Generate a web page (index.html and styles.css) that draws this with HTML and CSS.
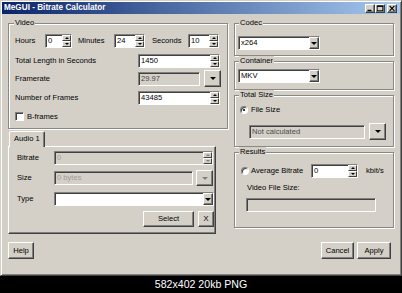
FILE: index.html
```html
<!DOCTYPE html>
<html>
<head>
<meta charset="utf-8">
<link rel="stylesheet" href="styles.css">
</head>
<body>
<div class="window">
  <div class="titlebar">
    <span class="title">MeGUI - Bitrate Calculator</span>
    <div class="caps">
      <span class="cap"><svg width="8" height="7" viewBox="0 0 8 7"><rect x="1.5" y="4.8" width="4" height="1.3" fill="#000"/></svg></span>
      <span class="cap"><svg width="8" height="7" viewBox="0 0 8 7"><rect x="1.2" y="0.9" width="5.6" height="4.8" fill="none" stroke="#000" stroke-width="0.8"/><rect x="1" y="0.6" width="6" height="1.3" fill="#000"/></svg></span>
      <span class="cap close"><svg width="8" height="7" viewBox="0 0 8 7"><path d="M1.6 0.9 L6.4 5.9 M6.4 0.9 L1.6 5.9" stroke="#000" stroke-width="1.2"/></svg></span>
    </div>
  </div>
  <div class="client">
    <div class="cols">
      <div class="left">
        <fieldset class="group video">
          <legend>Video</legend>
          <div class="row r1">
            <span class="lbl w-hours">Hours</span>
            <div class="tb w-hspin">0<span class="spin"><span class="sb"><i class="up"></i></span><span class="sb"><i class="dn"></i></span></span></div>
            <span class="lbl w-min">Minutes</span>
            <div class="tb w-mspin">24<span class="spin"><span class="sb"><i class="up"></i></span><span class="sb"><i class="dn"></i></span></span></div>
            <span class="lbl w-sec">Seconds</span>
            <div class="tb w-mspin">10<span class="spin"><span class="sb"><i class="up"></i></span><span class="sb"><i class="dn"></i></span></span></div>
          </div>
          <div class="row r2">
            <span class="lbl w-vlabel">Total Length in Seconds</span>
            <div class="tb w-vfield">1450<span class="spin"><span class="sb"><i class="up"></i></span><span class="sb"><i class="dn"></i></span></span></div>
          </div>
          <div class="row r3">
            <span class="lbl w-vlabel">Framerate</span>
            <div class="tb ro w-fr">29.97</div>
            <div class="btn ddbtn"><i class="tri"></i></div>
          </div>
          <div class="row r4">
            <span class="lbl w-vlabel">Number of Frames</span>
            <div class="tb w-vfield">43485<span class="spin"><span class="sb"><i class="up"></i></span><span class="sb"><i class="dn"></i></span></span></div>
          </div>
          <div class="row r5">
            <span class="chk"></span>
            <span class="lbl">B-frames</span>
          </div>
        </fieldset>
        <div class="tabs">
          <div class="tabstrip"><div class="tab">Audio 1</div></div>
          <div class="tabpanel">
            <div class="row p1">
              <span class="lbl w-alabel">Bitrate</span>
              <div class="tb dis w-abit">0<span class="spin"><span class="sb"><i class="up g"></i></span><span class="sb"><i class="dn g"></i></span></span></div>
            </div>
            <div class="row p2">
              <span class="lbl w-alabel">Size</span>
              <div class="tb dis w-asize">0 bytes</div>
              <div class="btn ddbtn small"><i class="tri g"></i></div>
            </div>
            <div class="row p3">
              <span class="lbl w-alabel">Type</span>
              <div class="tb w-atype"><span class="cbtn"><i class="tri"></i></span></div>
            </div>
            <div class="row p4">
              <div class="btn w-select">Select</div>
              <div class="btn w-x">X</div>
            </div>
          </div>
        </div>
      </div>
      <div class="right">
        <fieldset class="group codec">
          <legend>Codec</legend>
          <div class="tb w-combo">x264<span class="cbtn"><i class="tri"></i></span></div>
        </fieldset>
        <fieldset class="group container">
          <legend>Container</legend>
          <div class="tb w-combo">MKV<span class="cbtn"><i class="tri"></i></span></div>
        </fieldset>
        <fieldset class="group total">
          <legend>Total Size</legend>
          <div class="row t1">
            <span class="radio on"></span>
            <span class="lbl">File Size</span>
          </div>
          <div class="row t2">
            <div class="tb ro w-fsize">Not calculated</div>
            <div class="btn ddbtn"><i class="tri"></i></div>
          </div>
        </fieldset>
        <fieldset class="group results">
          <legend>Results</legend>
          <div class="row q1">
            <span class="radio"></span>
            <span class="lbl w-avg">Average Bitrate</span>
            <div class="tb w-avgspin">0<span class="spin"><span class="sb"><i class="up"></i></span><span class="sb"><i class="dn"></i></span></span></div>
            <span class="lbl kbit">kbit/s</span>
          </div>
          <div class="row q2"><span class="lbl">Video File Size:</span></div>
          <div class="row q3"><div class="tb ro w-vfs"></div></div>
        </fieldset>
      </div>
    </div>
    <div class="bottom">
      <div class="btn w-help">Help</div>
      <div class="spacer"></div>
      <div class="btn w-cancel">Cancel</div>
      <div class="btn w-apply">Apply</div>
    </div>
  </div>
</div>
<div class="caption">582x402 20kb PNG</div>
</body>
</html>
```
FILE: styles.css
```css
* { box-sizing: border-box; }
html, body { margin: 0; padding: 0; }
body {
  background: #000;
  width: 402px;
  height: 293px;
  overflow: hidden;
  font-family: "Liberation Sans", Arial, sans-serif;
}
.window {
  width: 402px;
  height: 276px;
  background: #d4d0c8;
  border: 1px solid;
  border-color: #d4d0c8 #404040 #404040 #d4d0c8;
  box-shadow: inset 1px 1px #fff, inset -1px -1px #808080;
  padding: 1px;
  display: flex;
  flex-direction: column;
  font-size: 7.6px;
  color: #000;
}
.titlebar {
  height: 12px;
  flex: none;
  background: linear-gradient(to right, #0a246a, #a6caf0);
  display: flex;
  align-items: center;
  padding: 0 3px 0 2px;
}
.title {
  flex: 1;
  color: #fff;
  font-weight: bold;
  font-size: 8.2px;
  line-height: 12px;
  white-space: nowrap;
}
.caps { display: flex; }
.cap {
  width: 10px;
  height: 9px;
  background: #d4d0c8;
  border: 1px solid;
  border-color: #fff #404040 #404040 #fff;
  box-shadow: inset -1px -1px #808080;
  display: flex;
}
.cap svg { display: block; }
.cap.close { margin-left: 2px; }

.client { flex: 1; display: flex; flex-direction: column; }
.cols {
  display: flex;
  gap: 6px;
  align-items: flex-start;
  padding: 4px 6px 0 6px;
}
.left { width: 220px; }
.right { width: 160px; }

fieldset.group {
  margin: 0;
  min-width: 0;
  border: 1px solid #8a8882;
  box-shadow: inset 1px 1px #fff, 1px 1px #fff;
}
fieldset.group legend {
  padding: 0 1px;
  font-size: 7.6px;
  line-height: 10px;
  height: 10px;
  background: #d4d0c8;
}
.lbl { line-height: 10px; white-space: nowrap; }
.row { display: flex; align-items: center; }

/* Video */
.video { padding: 6px 5px 7px 6px; }
.video legend { margin-left: -1px; }
.r1 { height: 14px; }
.w-hours { width: 30px; }
.w-hspin { width: 27px; }
.w-min { width: 36px; margin-left: 6px; }
.w-sec { width: 36px; margin-left: 7px; }
.w-mspin { width: 31px; }
.r2 { height: 14px; margin-top: 6px; }
.w-vlabel { width: 123px; }
.w-vfield { width: 82px; }
.r3 { height: 17px; margin-top: 2px; }
.w-fr { width: 62px; }
.r3 .ddbtn { margin-left: 4px; }
.r4 { height: 14px; margin-top: 4px; }
.r5 { height: 9px; margin-top: 7px; }
.chk {
  width: 9px; height: 9px;
  background: #fff;
  border: 1px solid;
  border-color: #808080 #fff #fff #808080;
  box-shadow: inset 1px 1px #404040;
  margin-right: 3px;
}

/* text boxes */
.tb {
  height: 14px;
  background: #fff;
  border: 1px solid;
  border-color: #808080 #fff #fff #808080;
  box-shadow: inset 1px 1px #404040;
  display: flex;
  align-items: center;
  padding-left: 2px;
  line-height: 10px;
  white-space: nowrap;
  color: #000;
}
.tb.dis { background: #d4d0c8; color: #a09c94; }
.tb.ro { background: #d4d0c8; color: #4a4a4a; }
.spin {
  margin-left: auto;
  width: 9px;
  height: 12px;
  display: flex;
  flex-direction: column;
}
.sb {
  flex: 1;
  background: #d4d0c8;
  border: 1px solid;
  border-color: #fff #404040 #404040 #fff;
  display: flex;
  align-items: center;
  justify-content: center;
}
.up, .dn { display: block; width: 0; height: 0; border-left: 2px solid transparent; border-right: 2px solid transparent; }
.up { border-bottom: 2px solid #000; }
.dn { border-top: 2px solid #000; }
.up.g { border-bottom-color: #808080; }
.dn.g { border-top-color: #808080; }
.tri { display: block; width: 0; height: 0; border-left: 3px solid transparent; border-right: 3px solid transparent; border-top: 3px solid #000; }
.tri.g { border-top-color: #808080; }
.cbtn {
  margin-left: auto;
  width: 10px;
  height: 12px;
  background: #d4d0c8;
  border: 1px solid;
  border-color: #fff #404040 #404040 #fff;
  box-shadow: inset -1px -1px #808080;
  display: flex;
  align-items: center;
  justify-content: center;
}

/* buttons */
.btn {
  height: 17px;
  background: #d4d0c8;
  border: 1px solid;
  border-color: #fff #404040 #404040 #fff;
  box-shadow: inset -1px -1px #808080;
  display: flex;
  align-items: center;
  justify-content: center;
  line-height: 10px;
}
.ddbtn { width: 17px; }
.ddbtn.small { height: 16px; }

/* tabs */
.tabs { margin-top: 2px; }
.tabstrip { display: flex; height: 15px; }
.tab {
  width: 36px;
  height: 16px;
  margin-left: 1px;
  padding-left: 4px;
  line-height: 13px;
  background: #d4d0c8;
  border: 1px solid;
  border-bottom: none;
  border-color: #fff #404040 transparent #fff;
  box-shadow: inset -1px 0 #808080;
  border-radius: 2px 2px 0 0;
  position: relative;
  z-index: 1;
}
.tabpanel {
  width: 208px;
  height: 88px;
  border: 1px solid;
  border-color: #fff #404040 #404040 #fff;
  box-shadow: inset -1px -1px #808080;
  padding: 4px 1px 0 8px;
}
.p1 { height: 14px; }
.w-alabel { width: 37px; }
.w-abit { width: 159px; }
.p2 { height: 16px; margin-top: 5px; }
.w-asize { width: 139px; }
.p2 .ddbtn { margin-left: 3px; }
.p3 { height: 14px; margin-top: 6px; }
.w-atype { width: 160px; }
.p4 { height: 16px; margin-top: 5px; justify-content: flex-end; gap: 4px; }
.p4 .btn { height: 16px; }
.w-select { width: 51px; }
.w-x { width: 16px; }

/* right column */
.codec { padding: 8px 3px 5px 3px; }
.codec legend { margin-left: 1px; }
.w-combo { width: 82px; }
.container { margin-top: 5px; padding: 3px 3px 6px 3px; }
.container legend { margin-left: 1px; }
.total { margin-top: 3px; padding: 5px 5px 6px 5px; }
.total legend { margin-left: -1px; }
.t1 { height: 10px; }
.radio {
  width: 8px; height: 8px;
  border-radius: 50%;
  background: #fff;
  border: 1px solid;
  border-color: #808080 #fff #fff #808080;
  box-shadow: inset 1px 1px #404040;
  margin-right: 3px;
  display: flex;
  align-items: center;
  justify-content: center;
}
.radio.on::after {
  content: "";
  width: 2px; height: 2px;
  border-radius: 50%;
  background: #000;
}
.t2 { height: 17px; margin-top: 8px; }
.w-fsize { width: 116px; margin-left: 9px; }
.t2 .ddbtn { margin-left: 4px; }
.results { margin-top: 6px; padding: 7px 5px 15px 6px; }
.results legend { margin-left: -2px; }
.q1 { height: 14px; }
.results .radio { margin-right: 2px; }
.w-avg { width: 60px; }
.w-avgspin { width: 47px; }
.kbit { margin-left: 8px; }
.q2 { height: 10px; margin-top: 5px; padding-left: 6px; }
.q3 { margin-top: 5px; padding-left: 5px; }
.w-vfs { width: 130px; }

/* bottom */
.bottom { display: flex; padding: 8px 9px 0 6px; }
.spacer { flex: 1; }
.w-help { width: 26px; }
.w-cancel { width: 33px; }
.w-apply { width: 34px; margin-left: 3px; }

.caption {
  height: 17px;
  color: #fff;
  font-size: 10.6px;
  line-height: 17px;
  text-align: center;
}
```
